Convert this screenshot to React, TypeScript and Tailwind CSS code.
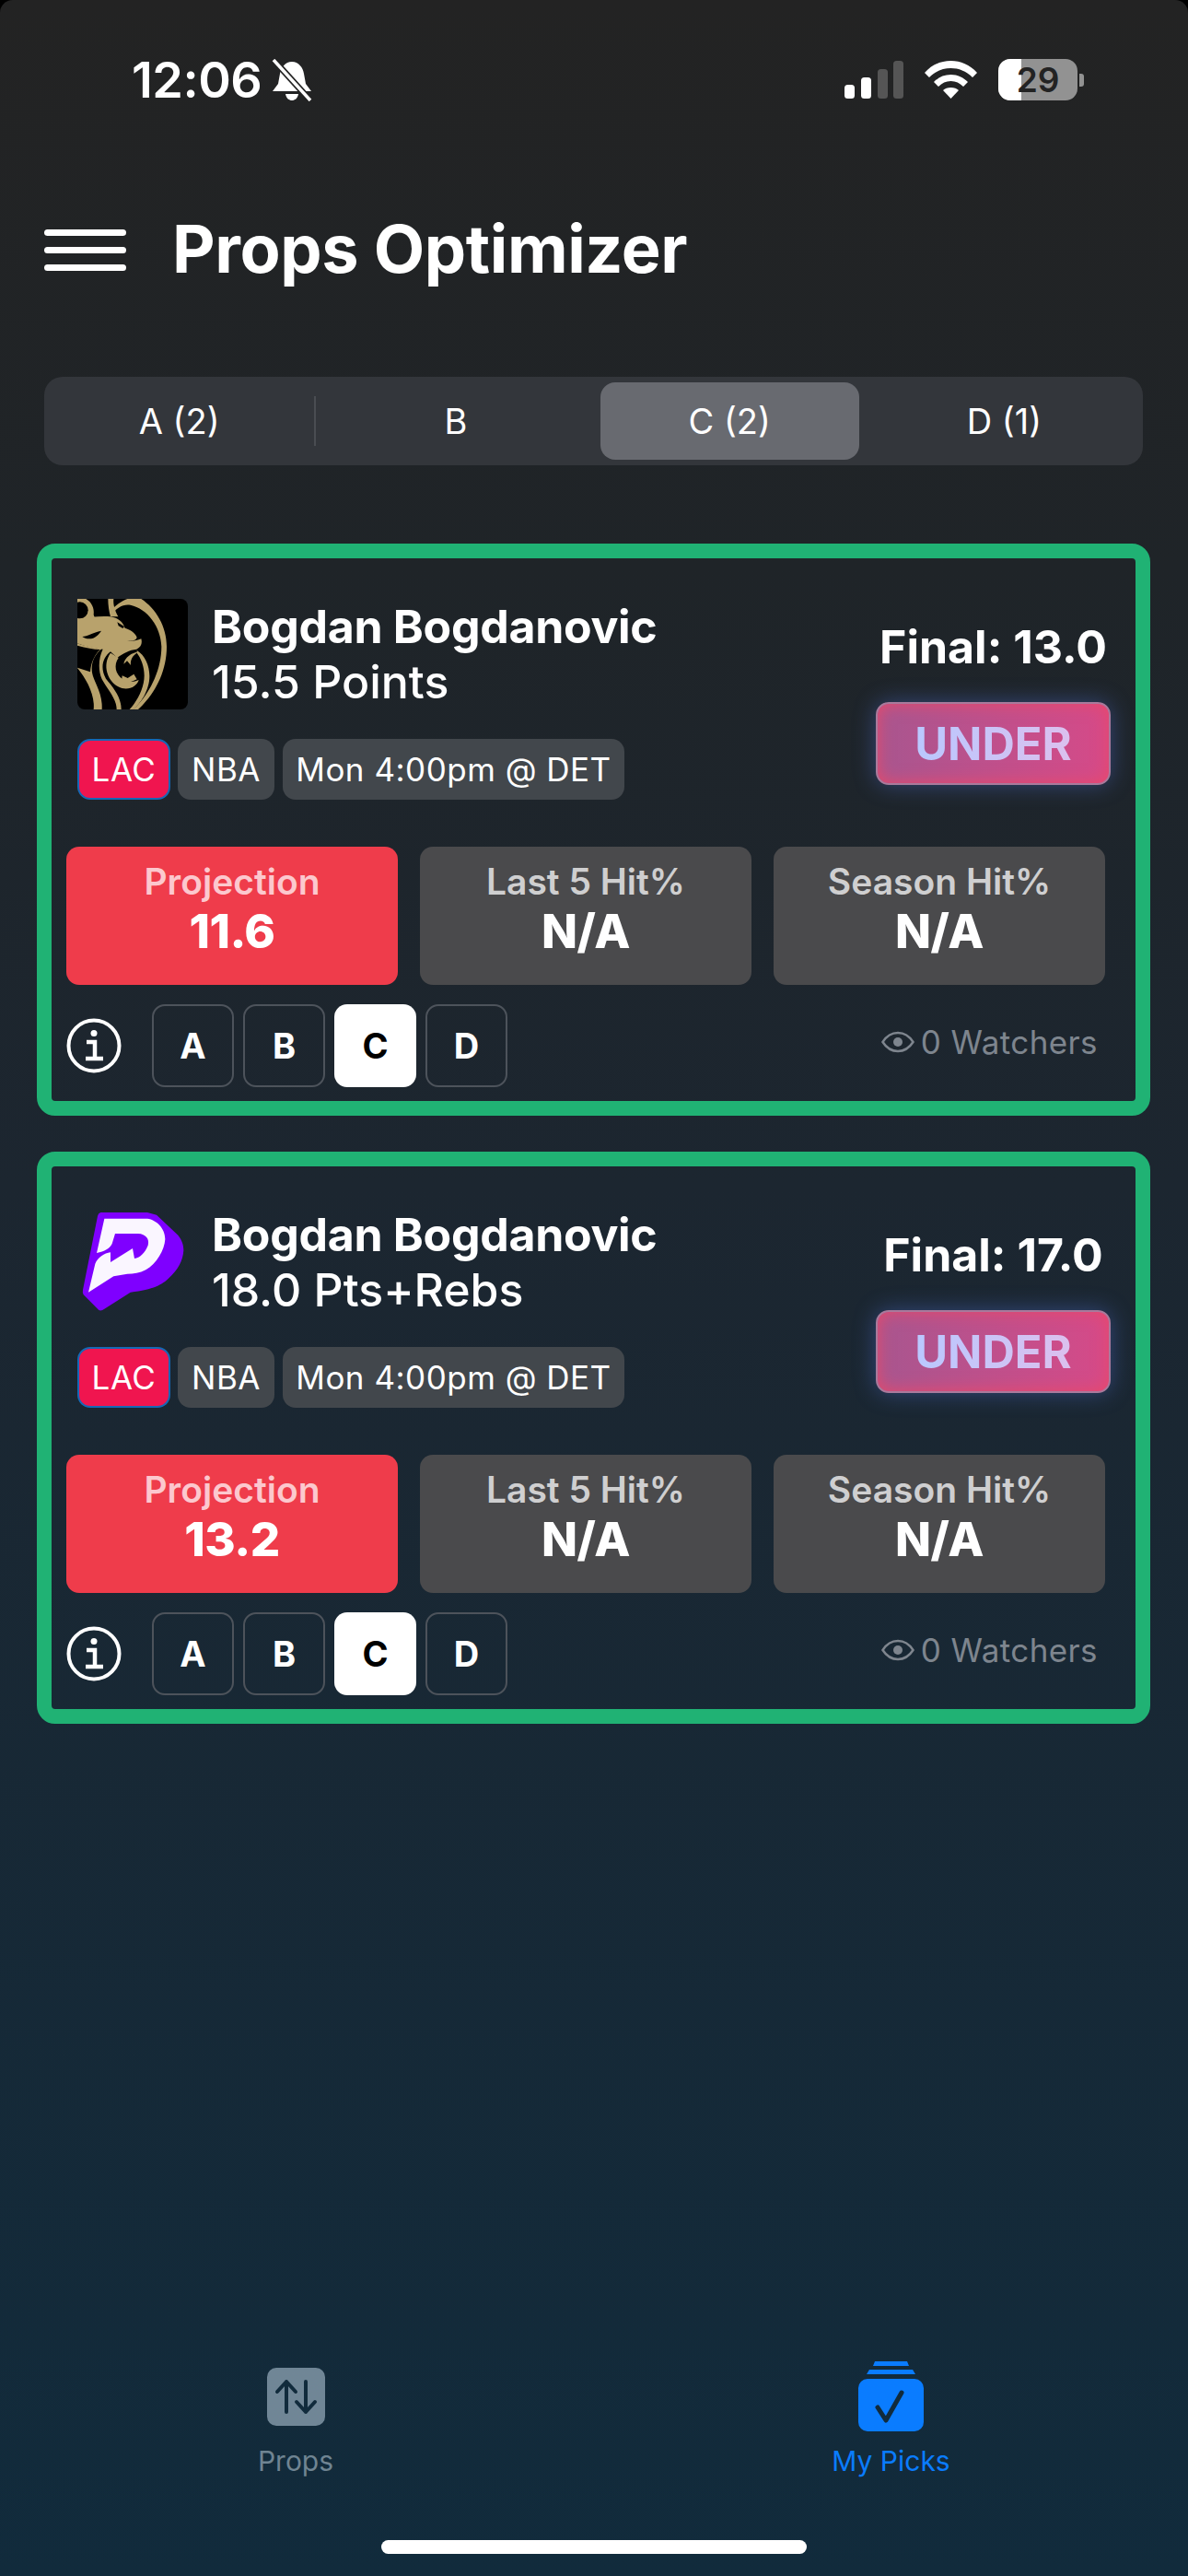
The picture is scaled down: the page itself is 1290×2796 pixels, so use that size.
const tabs = [
  { label: "A (2)", active: false, nudge: "pr-[14px]" },
  { label: "B", active: false, nudge: "pr-[4px]" },
  { label: "C (2)", active: true, nudge: "" },
  { label: "D (1)", active: false, nudge: "pl-[6px]" },
];

const picks = [
  { book: "betmgm", line: "15.5 Points", final: "13.0", projection: "11.6" },
  { book: "prizepicks", line: "18.0 Pts+Rebs", final: "17.0", projection: "13.2" },
];

function BetMgmLogo() {
  return (
    <svg width="120" height="120" viewBox="42 60 360 360" className="shrink-0">
      <rect x="42" y="60" width="360" height="360" rx="24" fill="#000" />
      <g fill="#b8a26c">
        {/* outer mane arc */}
        <path d="M205 60H250C298 92 333 150 333 215C333 300 292 372 240 420H224C270 378 316 300 316 215C314 150 270 92 215 80C190 76 170 90 160 105L152 98C165 82 185 68 205 60Z" />
        <path d="M42 60H70C88 70 98 90 95 112L100 125L42 128Z" />
        <path d="M142 60H160C158 80 165 100 175 118L150 118C145 100 142 80 142 60Z" />
        {/* head and brow */}
        <path d="M42 125C80 120 120 115 150 118C175 122 190 135 197 155C215 160 232 172 236 186C232 196 222 198 204 196C220 200 235 196 250 190C254 205 250 216 235 224C212 226 190 238 172 252L150 232C125 250 115 285 135 320C160 350 185 380 185 420H170C170 385 140 355 122 322C108 290 112 250 125 224C100 222 70 216 42 205Z" />
        {/* left mane strand */}
        <path d="M42 205C70 215 100 220 122 222C100 240 85 265 90 300C95 330 125 365 122 420H95C100 370 70 320 42 285Z" />
        {/* cheek strand right of the mouth */}
        <path d="M236 228C270 248 286 300 272 345C260 385 240 404 226 420H212C238 392 260 350 260 310C260 280 250 255 236 236Z" />
        {/* chin */}
        <path d="M150 236L176 252C160 275 165 305 190 322C205 332 225 332 242 324C236 346 205 362 175 346C140 326 122 276 150 236Z" />
        {/* fang and lower teeth */}
        <path d="M193 272C196 250 220 234 240 233C222 244 214 258 216 276L204 262Z" />
        <path d="M188 310L206 318L226 305L236 322C216 333 200 334 186 331Z" />
      </g>
      <circle cx="50" cy="97" r="27" fill="#000" />
      <path d="M42 212C70 220 95 224 116 225C96 245 86 270 84 298L42 284Z" fill="#000" />
      <path d="M58 183C75 182 92 170 120 164C112 176 100 190 80 190C72 190 64 188 58 183Z" fill="#000" />
      <path d="M172 136L195 150L190 156L176 148Z" fill="#000" />
    </svg>
  );
}

function PrizePicksLogo() {
  return (
    <svg width="120" height="120" viewBox="42 30 360 360" className="shrink-0">
      <path
        d="M118 48H270L300 56L370 122C384 140 388 155 388 172C386 205 370 235 340 262C320 282 290 300 215 308L130 362Q120 370 112 366L62 316Q58 310 60 300L108 60Q110 50 118 48Z"
        fill="#7f00ff"
      />
      <path
        d="M130 68H270C300 72 328 100 328 135C326 170 300 215 265 235C245 246 225 248 205 248L160 256L78 308L100 215C108 195 130 180 150 178L150 210L222 165L228 198C245 196 262 180 272 155C278 135 265 118 240 117H165L155 150C148 165 130 175 105 180Z"
        fill="#faf6ff"
      />
    </svg>
  );
}

function StatBox({ label, value, hot }: { label: string; value: string; hot?: boolean }) {
  return (
    <div className={`flex h-[150px] w-[360px] flex-col items-center rounded-[14px] pt-[13px] ${hot ? "bg-[#ef3c4b]" : "bg-[#4a4a4c]"}`}>
      <span className={`text-[39px] leading-[50px] font-semibold ${hot ? "text-[#fcc8ce]" : "text-[#cfcfd0]"}`}>{label}</span>
      <span className="text-[51px] leading-[58px] font-extrabold tracking-[-0.5px] text-white">{value}</span>
    </div>
  );
}

function PickCard({ book, line, final, projection }: (typeof picks)[number]) {
  return (
    <div className="flex h-[621px] w-[1209px] flex-col rounded-[20px] border-[16px] border-[#20b274] pt-[44px] pr-[33px] pl-[16px]">
      <div className="flex justify-between pl-[12px]">
        <div className="flex flex-col gap-[32px]">
          <div className="flex h-[120px] items-center gap-[26px]">
            {book === "betmgm" ? <BetMgmLogo /> : <PrizePicksLogo />}
            <div className="flex flex-col">
              <span className="text-[50px] leading-[60px] font-bold tracking-[-0.3px] text-white">Bogdan Bogdanovic</span>
              <span className="text-[50px] leading-[60px] font-medium text-white">{line}</span>
            </div>
          </div>
          <div className="flex h-[66px] text-[35px] tracking-[0.5px] text-white">
            <span className="flex w-[101px] items-center justify-center rounded-[14px] border-[2px] border-[#1668b5] bg-[#f0154f]">LAC</span>
            <span className="ml-[8px] flex w-[105px] items-center justify-center rounded-[14px] bg-[#42474c]">NBA</span>
            <span className="ml-[9px] flex w-[371px] items-center justify-center rounded-[14px] bg-[#42474c]">Mon 4:00pm @ DET</span>
          </div>
        </div>
        <div className="-mr-[6px] flex w-[255px] flex-col items-center">
          <span className="mt-[22px] text-[50px] leading-[60px] font-bold whitespace-nowrap text-white">Final: {final}</span>
          <div className="mt-[30px] flex h-[90px] w-[255px] items-center justify-center rounded-[14px] border-[2px] border-[#a87a9c] bg-[linear-gradient(90deg,#a8568f,#d64a88)] shadow-[0_0_24px_rgba(80,110,210,0.45),inset_0_0_18px_#ea4868]">
            <span className="bg-[linear-gradient(90deg,#b9c8ff,#dcc0ee)] bg-clip-text text-[49px] leading-none font-bold text-transparent">UNDER</span>
          </div>
        </div>
      </div>

      <div className="mt-[51px] flex gap-[24px]">
        <StatBox label="Projection" value={projection} hot />
        <StatBox label="Last 5 Hit%" value="N/A" />
        <StatBox label="Season Hit%" value="N/A" />
      </div>

      <div className="mt-[21px] flex items-center justify-between pr-[8px]">
        <div className="flex items-center">
          <svg width="60" height="60" viewBox="0 0 60 60" fill="none" stroke="#fff" strokeWidth="4" className="mr-[33px]">
            <circle cx="30" cy="30" r="27.5" />
            <circle cx="30" cy="16.5" r="3.5" fill="#fff" stroke="none" />
            <path d="M22 26H31V43M21 44H40" strokeWidth="4.5" />
          </svg>
          <div className="flex gap-[10px]">
            {["A", "B", "C", "D"].map((l) => (
              <span
                key={l}
                className={`flex h-[90px] w-[89px] items-center justify-center rounded-[14px] text-[38px] font-bold ${
                  l === "C" ? "bg-white text-black" : "border-[2px] border-[#4d535b] text-white"
                }`}
              >
                {l}
              </span>
            ))}
          </div>
        </div>
        <div className="-mt-[8px] flex items-center gap-[7px] text-[35px] tracking-[0.4px] text-[#7e858e]">
          <svg width="36" height="24" viewBox="0 0 36 24" fill="none" stroke="#7e858e" strokeWidth="2.5">
            <path d="M1.5 12C6 5 12 2 18 2S30 5 34.5 12C30 19 24 22 18 22S6 19 1.5 12Z" />
            <circle cx="18" cy="12" r="5" fill="#7e858e" stroke="none" />
          </svg>
          <span>0 Watchers</span>
        </div>
      </div>
    </div>
  );
}

export default function App() {
  return (
    <div className="h-[2796px] w-[1290px] overflow-hidden bg-black font-[family-name:Inter,sans-serif]">
      <div className="flex h-full flex-col rounded-t-[14px] bg-[linear-gradient(180deg,#232323_0%,#1f2428_22%,#1c2630_46%,#112b3c_100%)]">
        {/* Status bar */}
        <div className="flex h-[175px] shrink-0 items-start justify-between pt-[60px] pr-[113px] pl-[143px]">
          <div className="flex items-center gap-[10px]">
            <span className="text-[54px] leading-[54px] font-semibold tracking-[-0.5px] text-white">12:06</span>
            <svg width="46" height="46" viewBox="0 0 46 46" fill="#fff">
              <path d="M23 3C30 3 35 9 36 16L38 27L44 35H2L8 27L10 16C11 9 16 3 23 3Z" />
              <path d="M16 38H30C29 43 26 45 23 45S17 43 16 38Z" />
              <path d="M3 1L43 45" stroke="#232323" strokeWidth="7" />
              <path d="M3 1L43 45" stroke="#fff" strokeWidth="3.5" />
            </svg>
          </div>
          <div className="mt-[4px] flex items-center gap-[23px]">
            <svg width="64" height="41" viewBox="0 0 64 41">
              <rect x="0" y="26" width="11" height="15" rx="3.5" fill="#fff" />
              <rect x="18" y="18" width="11" height="23" rx="3.5" fill="#fff" />
              <rect x="36" y="9" width="11" height="32" rx="3.5" fill="#555" />
              <rect x="53" y="0" width="11" height="41" rx="3.5" fill="#555" />
            </svg>
            <svg width="57" height="41" viewBox="0 0 57 41" fill="#fff">
              <path d="M0 13C8 4 18 0 28.5 0S49 4 57 13L52 18C45 11 37 8 28.5 8S12 11 5 18Z" />
              <path d="M10 23C15 18 21 15 28.5 15S42 18 47 23L42 28C38 24 34 22 28.5 22S19 24 15 28Z" />
              <path d="M20 32C22 30 25 29 28.5 29S35 30 37 32L28.5 41Z" />
            </svg>
            <div className="flex items-center gap-[2px]">
              <div className="relative flex h-[45px] w-[86px] items-center justify-center overflow-hidden rounded-[13px] bg-[#929292] text-[37px] font-semibold text-[#232323]">
                <div className="absolute inset-y-0 left-0 w-[25px] bg-white" />
                <span className="relative">29</span>
              </div>
              <div className="h-[14px] w-[5px] rounded-r-[3px] bg-[#929292]" />
            </div>
          </div>
        </div>

        {/* Header */}
        <div className="mt-[57px] flex h-[78px] shrink-0 items-center pl-[48px]">
          <div className="flex w-[89px] flex-col gap-[12px]">
            <div className="h-[7px] rounded-full bg-white" />
            <div className="h-[7px] rounded-full bg-white" />
            <div className="h-[7px] rounded-full bg-white" />
          </div>
          <h1 className="-mt-[3px] ml-[50px] text-[72px] leading-none font-bold tracking-[-0.4px] text-white">Props Optimizer</h1>
        </div>

        {/* Group tabs */}
        <div className="mt-[99px] ml-[48px] flex h-[96px] w-[1193px] shrink-0 items-center rounded-[20px] bg-[#33363b] px-[6px]">
          {tabs.map((t, i) => (
            <div key={t.label} className="relative flex h-[84px] flex-1 items-center justify-center">
              {t.active ? (
                <div className="mx-[7px] flex h-full w-full items-center justify-center rounded-[16px] bg-[#686a70] text-[38px] text-white">{t.label}</div>
              ) : (
                <div className={`flex h-full w-full items-center justify-center text-[38px] text-white ${t.nudge}`}>{t.label}</div>
              )}
              {i === 0 && <div className="absolute top-[15px] right-[6px] h-[54px] w-[2px] bg-[#4a4d52]" />}
            </div>
          ))}
        </div>

        {/* Cards */}
        <div className="mt-[85px] ml-[40px] flex flex-col gap-[39px]">
          {picks.map((p) => (
            <PickCard key={p.book} {...p} />
          ))}
        </div>

        {/* Bottom tabs */}
        <div className="mt-auto flex shrink-0 flex-col">
          <div className="flex items-end">
            <div className="flex w-[642px] flex-col items-center">
              <svg width="63" height="63" viewBox="0 0 63 63" fill="none" stroke="#112b3c" strokeWidth="4" strokeLinecap="round" strokeLinejoin="round">
                <rect x="0" y="0" width="63" height="63" rx="10" fill="#708696" stroke="none" />
                <path d="M21 48V15M11 26L21 15L31 26" />
                <path d="M42 15V48M32 37L42 48L52 37" />
              </svg>
              <span className="mt-[19px] text-[30px] leading-[38px] text-[#6f8492]">Props</span>
            </div>
            <div className="ml-[3px] flex w-[645px] flex-col items-center">
              <svg width="71" height="76" viewBox="0 0 71 76" fill="none">
                <path d="M16 5L18 0H53L55 5Z" fill="#0a7cff" />
                <path d="M9 14L12 9H59L62 14Z" fill="#0a7cff" />
                <rect x="0" y="19" width="71" height="57" rx="10" fill="#0a7cff" />
                <path d="M21 50L30 64L47 34" stroke="#112b3c" strokeWidth="5" strokeLinecap="round" strokeLinejoin="round" />
              </svg>
              <span className="mt-[13px] text-[30px] leading-[38px] text-[#0a7cff]">My Picks</span>
            </div>
          </div>
          <div className="mt-[67px] mb-[24px] ml-[414px] h-[15px] w-[462px] rounded-full bg-white" />
        </div>
      </div>
    </div>
  );
}
